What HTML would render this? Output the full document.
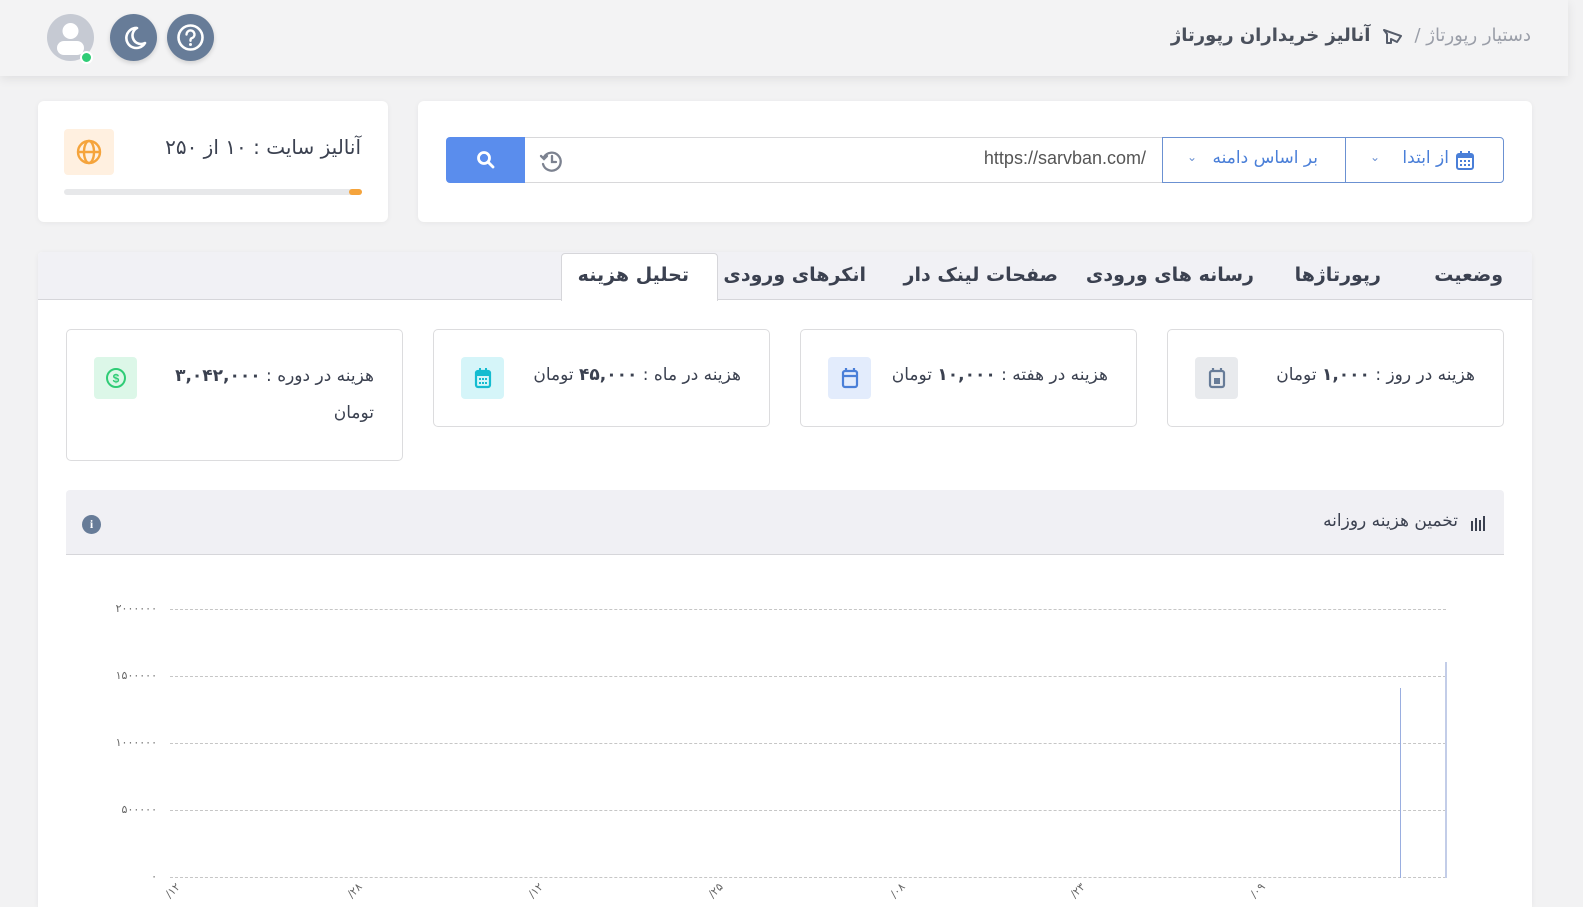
<!DOCTYPE html>
<html lang="fa" dir="rtl"><head><meta charset="utf-8">
<style>
*{box-sizing:border-box;margin:0;padding:0}
html,body{width:1583px;height:907px;overflow:hidden}
body{background:#f2f2f3;font-family:"DejaVu Sans","Liberation Sans",sans-serif;color:#3b4150;position:relative}
.abs{position:absolute}
.header{left:0;top:0;width:1568px;height:76px;background:#f3f3f4;box-shadow:0 3px 10px rgba(0,0,0,.08)}
.card{background:#fff;border-radius:6px;box-shadow:0 1px 6px rgba(0,0,0,.05)}
.circ{width:47px;height:47px;border-radius:50%;background:#677c98;top:14px;box-shadow:0 2px 5px rgba(0,0,0,.15)}
.stat{background:#fff;border:1px solid #dcdcde;border-radius:5px;top:329px;height:98px}
.stat .t{position:absolute;right:28px;top:35px;font-size:17px;color:#3b4150;white-space:nowrap}
.stat .t b{font-weight:bold}
.ico{position:absolute;width:43px;height:42px;border-radius:4px;top:27px;display:flex;align-items:center;justify-content:center}
.tab{top:264px;font-size:19px;font-weight:bold;color:#3b4150;white-space:nowrap}
.gl{left:170px;width:1276px;border-top:1px dashed #c6c6c6;height:0}
.yl{right:1426px;font-size:11px;color:#666;direction:ltr}
.xl{font-size:11px;color:#666;transform:rotate(-45deg)}
</style></head><body>
<div class="abs header"></div>
<div class="abs" style="left:47px;top:14px;width:47px;height:47px;border-radius:50%;background:#c6cad3;overflow:hidden">
<svg width="47" height="47"><circle cx="23.5" cy="17" r="8" fill="#fff"/><rect x="10" y="27" width="27" height="14" rx="7" fill="#fff"/></svg></div>
<div class="abs" style="left:80px;top:51px;width:13px;height:13px;border-radius:50%;background:#2fcc76;border:2px solid #fff"></div>
<div class="abs circ" style="left:110px"><svg width="47" height="47"><path d="M27 14a10 10 0 1 0 8 15a8 8 0 0 1 -8 -15z" fill="none" stroke="#fff" stroke-width="2.6" stroke-linejoin="round"/></svg></div>
<div class="abs circ" style="left:167px"><svg width="47" height="47"><circle cx="23.5" cy="23.5" r="12" fill="none" stroke="#fff" stroke-width="2.6"/><path d="M19.5 20.5a4 4 0 1 1 5 3.8c-1 .4-1 1.2-1 2.5" fill="none" stroke="#fff" stroke-width="2.4" stroke-linecap="round"/><circle cx="23.5" cy="30.5" r="1.5" fill="#fff"/></svg></div>
<div class="abs" style="right:52px;top:25px;font-size:18px;white-space:nowrap"><span style="color:#9a9ea8">دستیار رپورتاژ / </span><svg width="24" height="20" style="vertical-align:middle;margin:0 4px"><path d="M3 4l17 6-4 6-6-3v4H6V8z" fill="none" stroke="#555c6a" stroke-width="2" stroke-linejoin="round"/></svg><b style="color:#4a505c"> آنالیز خریداران رپورتاژ</b></div>

<div class="abs card" style="left:38px;top:101px;width:350px;height:121px"></div>
<div class="abs" style="left:64px;top:129px;width:50px;height:46px;border-radius:4px;background:#fff0e0;display:flex;align-items:center;justify-content:center"><svg width="28" height="28" viewBox="0 0 28 28" fill="none" stroke="#f5a43c" stroke-width="2.4"><circle cx="14" cy="14" r="11"/><ellipse cx="14" cy="14" rx="5" ry="11"/><path d="M3 14h22"/></svg></div>
<div class="abs" style="right:1222px;top:135px;font-size:20px;color:#3b4150;white-space:nowrap">آنالیز سایت : ۱۰ از ۲۵۰</div>
<div class="abs" style="left:64px;top:189px;width:298px;height:6px;border-radius:3px;background:#e7e8ea"></div>
<div class="abs" style="left:349px;top:189px;width:13px;height:6px;border-radius:3px;background:#f5a43c"></div>

<div class="abs card" style="left:418px;top:101px;width:1114px;height:121px"></div>
<div class="abs" style="left:446px;top:137px;width:79px;height:46px;background:#5a8ded;border-radius:4px 0 0 4px;display:flex;align-items:center;justify-content:center"><svg width="22" height="22" fill="none" stroke="#fff" stroke-width="2.8" stroke-linecap="round"><circle cx="9" cy="9" r="5.5"/><path d="M13 13l5 5"/></svg></div>
<div class="abs" style="left:525px;top:137px;width:638px;height:46px;border-top:1px solid #d8d8da;border-bottom:1px solid #d8d8da"></div>
<svg class="abs" style="left:538px;top:148px" width="26" height="26" fill="none" stroke="#7c8290" stroke-width="2.3" stroke-linecap="round"><path d="M6 9a9 9 0 1 1 -1 7"/><path d="M3 8l3 3 3-3"/><path d="M14 8v6h4"/></svg>
<div class="abs" style="right:437px;top:148px;font-size:18px;color:#555;direction:ltr;font-family:'Liberation Sans',sans-serif">https://sarvban.com/</div>
<div class="abs" style="left:1162px;top:137px;width:184px;height:46px;border:1px solid #6b91d2"></div>
<div class="abs" style="right:265px;top:148px;font-size:17px;color:#4a7fd8;white-space:nowrap">بر اساس دامنه</div>
<div class="abs" style="left:1187px;top:150px;font-size:12px;color:#6b91d2">&#8964;</div>
<div class="abs" style="left:1345px;top:137px;width:159px;height:46px;border:1px solid #6b91d2;border-radius:0 4px 4px 0"></div>
<svg class="abs" style="left:1455px;top:150px" width="20" height="21" fill="#4a7fd8"><rect x="2" y="4" width="16" height="15" rx="2" fill="none" stroke="#4a7fd8" stroke-width="2"/><rect x="5" y="1" width="2" height="5"/><rect x="13" y="1" width="2" height="5"/><rect x="2" y="5" width="16" height="3"/><rect x="5" y="10" width="2" height="2"/><rect x="9" y="10" width="2" height="2"/><rect x="13" y="10" width="2" height="2"/><rect x="5" y="14" width="2" height="2"/><rect x="9" y="14" width="2" height="2"/><rect x="13" y="14" width="2" height="2"/></svg>
<div class="abs" style="right:134px;top:148px;font-size:17px;color:#4a7fd8;white-space:nowrap">از ابتدا</div>
<div class="abs" style="left:1370px;top:150px;font-size:12px;color:#6b91d2">&#8964;</div>

<div class="abs card" style="left:38px;top:252px;width:1494px;height:655px;border-radius:4px 4px 0 0"></div>
<div class="abs" style="left:38px;top:252px;width:1494px;height:48px;background:#f1f1f5;border-bottom:1px solid #d6d6da;border-radius:4px 4px 0 0"></div>
<div class="abs" style="left:561px;top:253px;width:157px;height:48px;background:#fff;border:1px solid #d6d6da;border-bottom:none;border-radius:4px 4px 0 0"></div>
<div class="abs tab" style="right:80px">وضعیت</div>
<div class="abs tab" style="right:202px">رپورتاژها</div>
<div class="abs tab" style="right:329px">رسانه های ورودی</div>
<div class="abs tab" style="right:525px">صفحات لینک دار</div>
<div class="abs tab" style="right:717px">انکرهای ورودی</div>
<div class="abs tab" style="right:894px">تحلیل هزینه</div>

<div class="abs stat" style="left:1167px;width:337px"><div class="t">هزینه در روز : <b>۱,۰۰۰</b> تومان</div>
<div class="ico" style="left:27px;background:#e8eaed"><svg width="18" height="22" fill="none" stroke="#677c98" stroke-width="2.2"><rect x="2" y="4" width="14" height="16" rx="2"/><path d="M5 1v4M13 1v4"/><rect x="6" y="11" width="6" height="6" fill="#677c98" stroke="none"/></svg></div></div>
<div class="abs stat" style="left:800px;width:337px"><div class="t">هزینه در هفته : <b>۱۰,۰۰۰</b> تومان</div>
<div class="ico" style="left:27px;background:#e3ecfc"><svg width="18" height="22" fill="none" stroke="#4a7fd8" stroke-width="2.2"><rect x="2" y="4" width="14" height="16" rx="2"/><path d="M5 1v4M13 1v4M2 9h14"/></svg></div></div>
<div class="abs stat" style="left:433px;width:337px"><div class="t">هزینه در ماه : <b>۴۵,۰۰۰</b> تومان</div>
<div class="ico" style="left:27px;background:#d5f5f9"><svg width="18" height="22" fill="#14bcd0"><rect x="2" y="4" width="14" height="16" rx="2" fill="none" stroke="#14bcd0" stroke-width="2.2"/><rect x="2" y="5" width="14" height="4"/><rect x="5" y="1" width="2" height="5"/><rect x="11" y="1" width="2" height="5"/><rect x="5" y="11" width="2" height="2"/><rect x="8" y="11" width="2" height="2"/><rect x="11" y="11" width="2" height="2"/><rect x="5" y="15" width="2" height="2"/><rect x="8" y="15" width="2" height="2"/><rect x="11" y="15" width="2" height="2"/></svg></div></div>
<div class="abs stat" style="left:66px;width:337px;height:132px"><div class="t" style="line-height:37px;top:28px;white-space:normal;width:220px">هزینه در دوره : <b>۳,۰۴۲,۰۰۰</b> تومان</div>
<div class="ico" style="left:27px;background:#dcf7e8"><svg width="22" height="22" fill="none" stroke="#2fcc76" stroke-width="2"><circle cx="11" cy="11" r="9"/><text x="11" y="15.5" font-size="12" font-weight="bold" text-anchor="middle" fill="#2fcc76" stroke="none" font-family="Liberation Sans">$</text></svg></div></div>

<div class="abs" style="left:66px;top:490px;width:1438px;height:65px;background:#f0f0f4;border-bottom:1px solid #d6d6da;border-radius:4px 4px 0 0"></div>
<div class="abs" style="left:82px;top:515px;width:19px;height:19px;border-radius:50%;background:#677c98;color:#fff;font-size:12px;text-align:center;line-height:19px;font-weight:bold;font-family:'Liberation Serif',serif">i</div>
<svg class="abs" style="left:1470px;top:515px" width="16" height="16" fill="#3b4150"><rect x="1" y="6" width="2" height="10"/><rect x="5" y="3" width="2" height="13"/><rect x="9" y="5" width="2" height="11"/><rect x="13" y="1" width="2" height="15"/></svg>
<div class="abs" style="right:125px;top:511px;font-size:17px;color:#3b4150;white-space:nowrap">تخمین هزینه روزانه</div>

<div class="abs gl" style="top:609px"></div>
<div class="abs gl" style="top:676px"></div>
<div class="abs gl" style="top:743px"></div>
<div class="abs gl" style="top:810px"></div>
<div class="abs gl" style="top:877px"></div>
<div class="abs yl" style="top:602px">۲۰۰۰۰۰۰</div>
<div class="abs yl" style="top:669px">۱۵۰۰۰۰۰</div>
<div class="abs yl" style="top:736px">۱۰۰۰۰۰۰</div>
<div class="abs yl" style="top:803px">۵۰۰۰۰۰</div>
<div class="abs yl" style="top:870px">۰</div>
<div class="abs" style="left:1400px;top:688px;width:1px;height:190px;background:#9aaee0"></div>
<div class="abs" style="left:1445px;top:662px;width:2px;height:216px;background:#c3cde8"></div>
<div class="abs xl" style="left:165px;top:884px">۱۲/</div>
<div class="abs xl" style="left:347px;top:884px">۲۸/</div>
<div class="abs xl" style="left:528px;top:884px">۱۲/</div>
<div class="abs xl" style="left:708px;top:884px">۲۵/</div>
<div class="abs xl" style="left:890px;top:884px">۰۸/</div>
<div class="abs xl" style="left:1070px;top:884px">۲۳/</div>
<div class="abs xl" style="left:1250px;top:884px">۰۹/</div>
</body></html>
